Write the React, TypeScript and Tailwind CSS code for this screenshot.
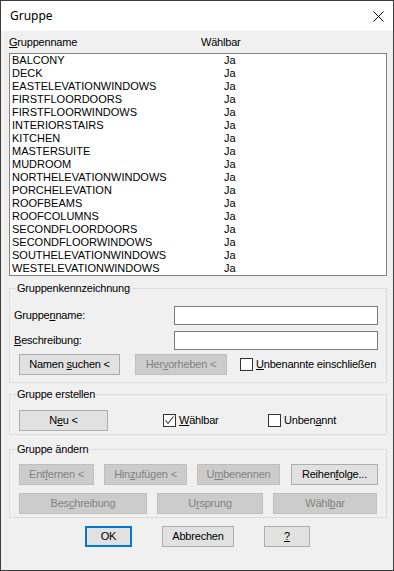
import React from 'react'

type BtnProps = {
  className: string
  disabled?: boolean
  focused?: boolean
  children: React.ReactNode
}

function Btn({ className, disabled, focused, children }: BtnProps) {
  return (
    <div
      className={
        'h-[21px] flex items-center justify-center leading-[13px] whitespace-nowrap box-border ' +
        (focused
          ? 'border-2 border-[#0078d7] bg-[#e1e1e1] text-black '
          : disabled
            ? 'border border-[#bfbfbf] bg-[#cccccc] text-[#838383] '
            : 'border border-[#adadad] bg-[#e1e1e1] text-black ') +
        className
      }
    >
      <span>{children}</span>
    </div>
  )
}

function Check({ checked }: { checked?: boolean }) {
  return (
    <div className="w-[13px] h-[13px] shrink-0 border border-[#333333] bg-white box-border flex items-center justify-center">
      {checked && (
        <svg width="11" height="11" viewBox="0 0 11 11">
          <polyline points="1.5,5.5 4,8.5 9.5,1.5" fill="none" stroke="#333333" strokeWidth="1.1" />
        </svg>
      )}
    </div>
  )
}

function GroupBox({ title, className, children }: { title: string; className: string; children: React.ReactNode }) {
  return (
    <div className={'border border-[#dcdcdc] flex flex-col ' + className}>
      <span className="-mt-[7px] ml-[6px] px-[1px] bg-[#f0f0f0] self-start leading-[13px]">{title}</span>
      {children}
    </div>
  )
}

const groups = [
  'BALCONY',
  'DECK',
  'EASTELEVATIONWINDOWS',
  'FIRSTFLOORDOORS',
  'FIRSTFLOORWINDOWS',
  'INTERIORSTAIRS',
  'KITCHEN',
  'MASTERSUITE',
  'MUDROOM',
  'NORTHELEVATIONWINDOWS',
  'PORCHELEVATION',
  'ROOFBEAMS',
  'ROOFCOLUMNS',
  'SECONDFLOORDOORS',
  'SECONDFLOORWINDOWS',
  'SOUTHELEVATIONWINDOWS',
  'WESTELEVATIONWINDOWS',
]

export default function App() {
  return (
    <div className="w-[394px] h-[571px] box-border border border-[#3c3c3c] bg-[#f0f0f0] flex flex-col font-['Liberation_Sans',Arial,sans-serif] text-[11px] tracking-[-0.2px] text-black">
      {/* Title bar */}
      <div className="h-[30px] shrink-0 bg-white flex items-center justify-between pl-[9px] pr-[9px]">
        <span className="font-['Noto_Sans',sans-serif] text-[12px] tracking-normal">Gruppe</span>
        <svg width="11" height="11" viewBox="0 0 11 11">
          <path d="M0.5 0.5 L10.5 10.5 M10.5 0.5 L0.5 10.5" stroke="#000" strokeWidth="1" />
        </svg>
      </div>

      <div className="flex flex-col pl-[8px] pr-[6px]">
        {/* Column header */}
        <div className="mt-[5px] h-[13px] flex leading-[13px]">
          <span className="w-[192px]">
            <u>G</u>ruppenname
          </span>
          <span>Wählbar</span>
        </div>

        {/* List */}
        <div className="mt-[4px] h-[223px] box-border border border-[#828282] bg-white flex flex-col tracking-normal">
          {groups.map((g) => (
            <div key={g} className="h-[13px] flex leading-[13px]">
              <span className="w-[214px] pl-[2px] box-border">{g}</span>
              <span>Ja</span>
            </div>
          ))}
        </div>

        {/* Gruppenkennzeichnung */}
        <GroupBox title="Gruppenkennzeichnung" className="mt-[12px] pb-[7px]">
          <div className="mt-[11px] h-[19px] flex items-center pl-[4px] pr-[8px]">
            <span>
              Gruppe<u>n</u>name:
            </span>
            <div className="ml-auto w-[204px] h-[19px] box-border border border-[#7a7a7a] bg-white" />
          </div>
          <div className="mt-[6px] h-[19px] flex items-center pl-[4px] pr-[8px]">
            <span>
              <u>B</u>eschreibung:
            </span>
            <div className="ml-auto w-[204px] h-[19px] box-border border border-[#7a7a7a] bg-white" />
          </div>
          <div className="mt-[4px] flex items-center pl-[9px]">
            <Btn className="w-[101px]">
              Namen <u>s</u>uchen &lt;
            </Btn>
            <Btn className="w-[92px] ml-[15px]" disabled>
              Her<u>v</u>orheben &lt;
            </Btn>
            <div className="ml-[13px] flex items-center">
              <Check />
              <span className="ml-[3px] leading-[13px] whitespace-nowrap">
                <u>U</u>nbenannte einschließen
              </span>
            </div>
          </div>
        </GroupBox>

        {/* Gruppe erstellen */}
        <GroupBox title="Gruppe erstellen" className="mt-[11px] pb-[3px]">
          <div className="mt-[9px] flex items-center pl-[9px]">
            <Btn className="w-[89px]">
              N<u>e</u>u &lt;
            </Btn>
            <div className="ml-[55px] w-[105px] flex items-center">
              <Check checked />
              <span className="ml-[3px] leading-[13px]">
                <u>W</u>ählbar
              </span>
            </div>
            <div className="flex items-center">
              <Check />
              <span className="ml-[3px] leading-[13px]">
                Unben<u>a</u>nnt
              </span>
            </div>
          </div>
        </GroupBox>

        {/* Gruppe ändern */}
        <GroupBox title="Gruppe ändern" className="mt-[14px] pb-[3px]">
          <div className="mt-[8px] flex items-center pl-[9px]">
            <Btn className="w-[75px]" disabled>
              Ent<u>f</u>ernen &lt;
            </Btn>
            <Btn className="w-[83px] ml-[10px]" disabled>
              Hin<u>z</u>ufügen &lt;
            </Btn>
            <Btn className="w-[83px] ml-[10px]" disabled>
              U<u>m</u>benennen
            </Btn>
            <Btn className="w-[87px] ml-[11px]">
              Reihen<u>f</u>olge...
            </Btn>
          </div>
          <div className="mt-[8px] flex items-center pl-[9px]">
            <Btn className="w-[128px]" disabled>
              Bes<u>c</u>hreibung
            </Btn>
            <Btn className="w-[106px] ml-[10px]" disabled>
              U<u>r</u>sprung
            </Btn>
            <Btn className="w-[104px] ml-[10px]" disabled>
              Wähl<u>b</u>ar
            </Btn>
          </div>
        </GroupBox>

        {/* Dialog buttons */}
        <div className="mt-[8px] flex items-center pl-[76px]">
          <Btn className="w-[47px]" focused>
            OK
          </Btn>
          <Btn className="w-[72px] ml-[30px]">Abbrechen</Btn>
          <Btn className="w-[46px] ml-[30px]">
            <u>?</u>
          </Btn>
        </div>
      </div>
    </div>
  )
}
